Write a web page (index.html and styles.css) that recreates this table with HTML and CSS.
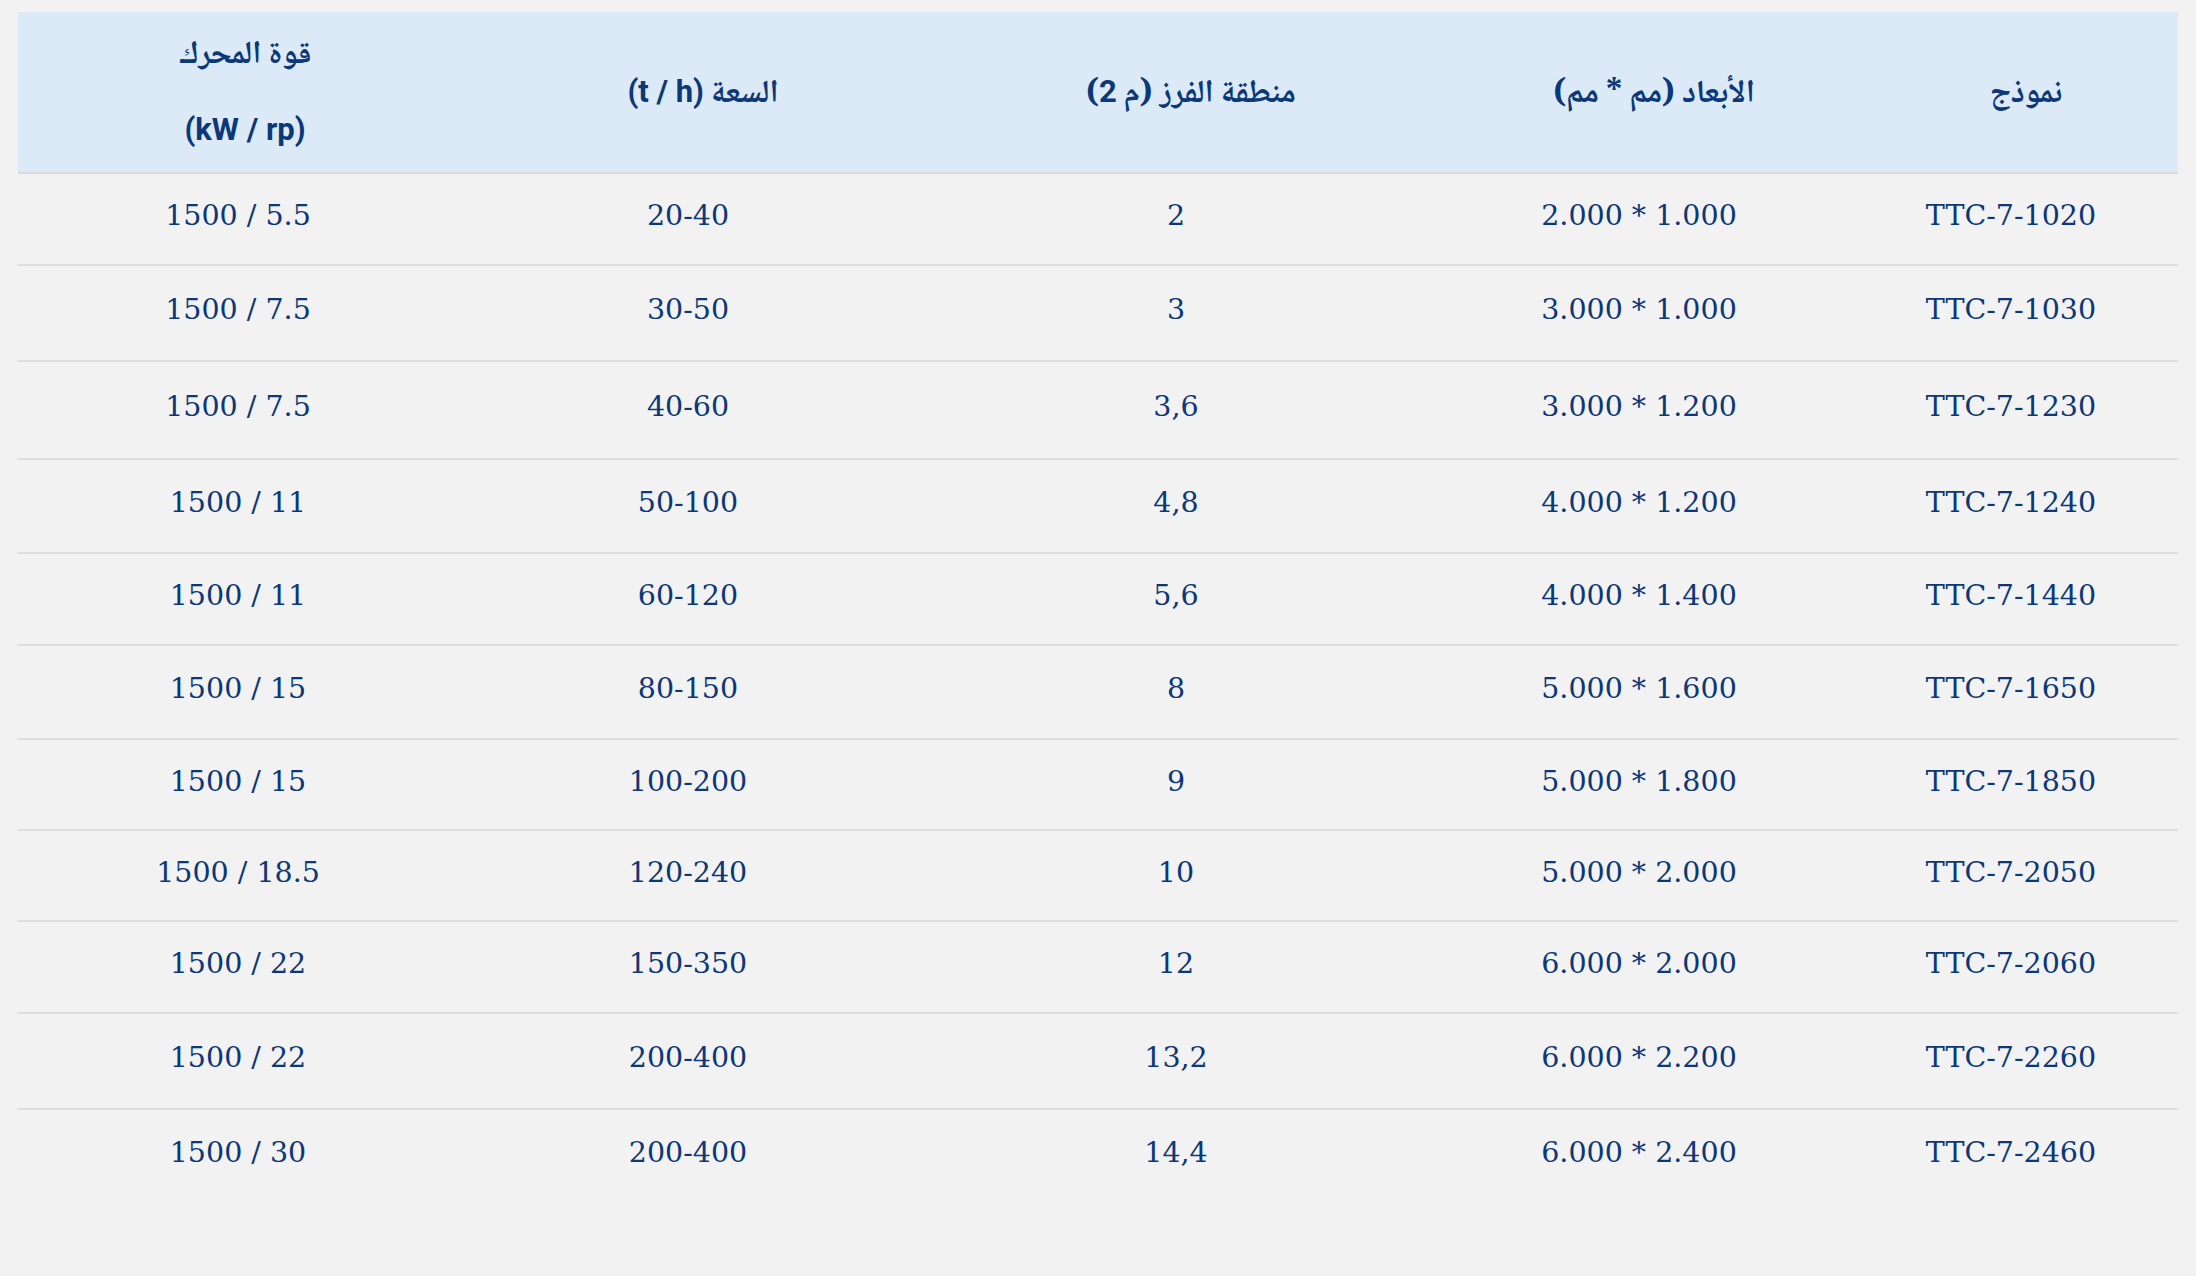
FILE: index.html
```html
<!DOCTYPE html>
<html lang="ar" dir="rtl">
<head>
<meta charset="utf-8">
<title>جدول المواصفات</title>
<link rel="stylesheet" href="styles.css">
</head>
<body>
<div class="page">
<table class="spec">
<colgroup>
<col class="c1"><col class="c2"><col class="c3"><col class="c4"><col class="c5">
</colgroup>
<thead>
<tr>
<th>نموذج</th>
<th>الأبعاد (مم * مم)</th>
<th>منطقة الفرز (م <span class="lat">2</span>)</th>
<th>السعة <span class="lat">(t / h)</span></th>
<th class="power">قوة المحرك<br><span class="lat">(kW / rp)</span></th>
</tr>
</thead>
<tbody>
<tr><td>TTC-7-1020</td><td>2.000 * 1.000</td><td>2</td><td>20-40</td><td>1500 / 5.5</td></tr>
<tr><td>TTC-7-1030</td><td>3.000 * 1.000</td><td>3</td><td>30-50</td><td>1500 / 7.5</td></tr>
<tr><td>TTC-7-1230</td><td>3.000 * 1.200</td><td>3,6</td><td>40-60</td><td>1500 / 7.5</td></tr>
<tr><td>TTC-7-1240</td><td>4.000 * 1.200</td><td>4,8</td><td>50-100</td><td>1500 / 11</td></tr>
<tr><td>TTC-7-1440</td><td>4.000 * 1.400</td><td>5,6</td><td>60-120</td><td>1500 / 11</td></tr>
<tr><td>TTC-7-1650</td><td>5.000 * 1.600</td><td>8</td><td>80-150</td><td>1500 / 15</td></tr>
<tr><td>TTC-7-1850</td><td>5.000 * 1.800</td><td>9</td><td>100-200</td><td>1500 / 15</td></tr>
<tr><td>TTC-7-2050</td><td>5.000 * 2.000</td><td>10</td><td>120-240</td><td>1500 / 18.5</td></tr>
<tr><td>TTC-7-2060</td><td>6.000 * 2.000</td><td>12</td><td>150-350</td><td>1500 / 22</td></tr>
<tr><td>TTC-7-2260</td><td>6.000 * 2.200</td><td>13,2</td><td>200-400</td><td>1500 / 22</td></tr>
<tr><td>TTC-7-2460</td><td>6.000 * 2.400</td><td>14,4</td><td>200-400</td><td>1500 / 30</td></tr>
</tbody>
</table>
</div>
</body>
</html>
```
FILE: styles.css
```css
html, body {
  margin: 0;
  padding: 0;
  background: #f2f2f2;
}
.page {
  padding: 12px 18px 0 18px;
}
.spec {
  direction: rtl;
  border-collapse: collapse;
  table-layout: fixed;
  width: 2160px;
  color: #0c3778;
}
.c1 { width: 334px; }
.c2 { width: 410px; }
.c3 { width: 516px; }
.c4 { width: 460px; }
.c5 { width: 440px; }
.spec th {
  background: #dbeaf6;
  height: 154px;
  padding: 6px 0 0 30px;
  line-height: 77px;
  vertical-align: middle;
  text-align: center;
  font-family: "Noto Naskh Arabic", "Noto Sans Arabic", "DejaVu Sans", sans-serif;
  font-weight: 700;
  font-size: 32px;
  border-bottom: 2px solid #dcdcdc;
}
.spec th.power {
  padding-left: 14px;
}
.spec th .lat {
  font-family: Roboto, "Liberation Sans", sans-serif;
  font-size: 31px;
  font-weight: 700;
  line-height: 1;
}
.spec td {
  direction: ltr;
  padding: 0 0 7px 0;
  text-align: center;
  vertical-align: middle;
  font-family: "DejaVu Serif", "Liberation Serif", serif;
  font-size: 28.5px;
  border-bottom: 2px solid #dedede;
}
.spec tbody tr:nth-child(1) td { height: 83px; }
.spec tbody tr:nth-child(2) td { height: 87px; }
.spec tbody tr:nth-child(3) td { height: 89px; }
.spec tbody tr:nth-child(4) td { height: 85px; }
.spec tbody tr:nth-child(5) td { height: 83px; }
.spec tbody tr:nth-child(6) td { height: 85px; }
.spec tbody tr:nth-child(7) td { height: 82px; }
.spec tbody tr:nth-child(8) td { height: 82px; }
.spec tbody tr:nth-child(9) td { height: 83px; }
.spec tbody tr:nth-child(10) td { height: 87px; }
.spec tbody tr:nth-child(11) td { height: 85px; border-bottom: none; }
```
